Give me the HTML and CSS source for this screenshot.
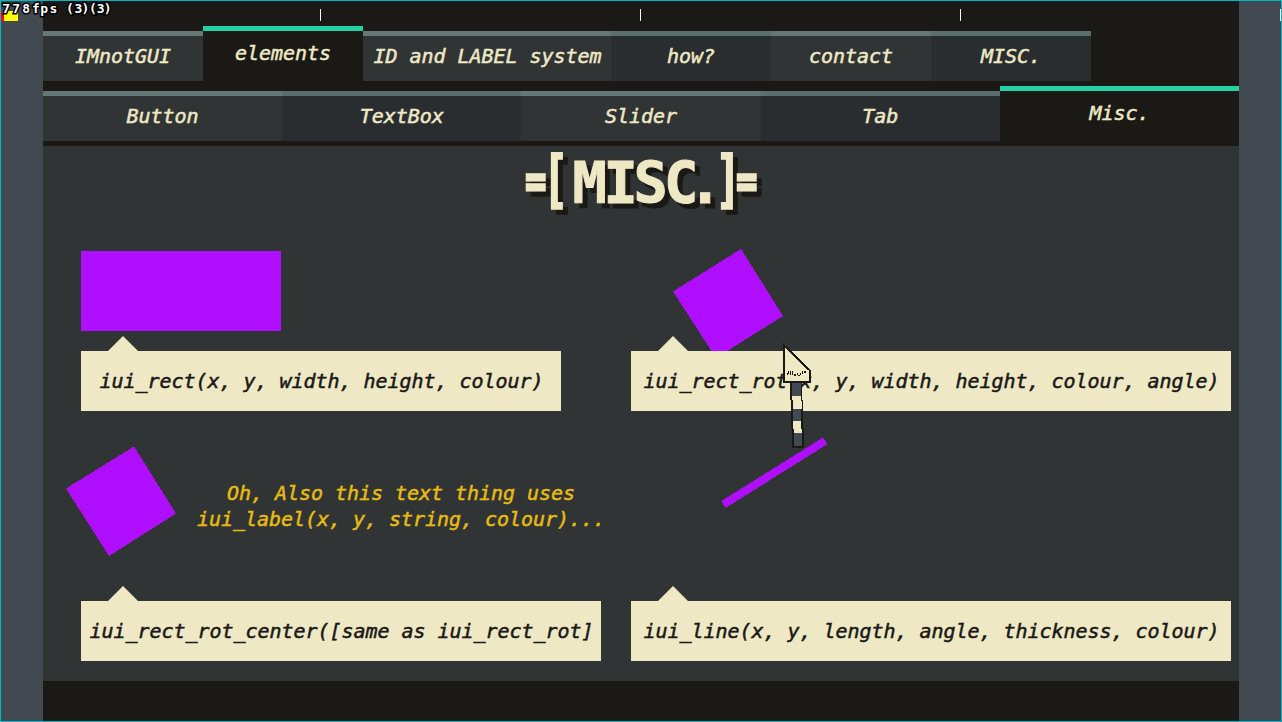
FILE: index.html
```html
<!DOCTYPE html>
<html lang="en">
<head>
<meta charset="utf-8">
<title>IMnotGUI</title>
<link rel="stylesheet" href="styles.css">
</head>
<body>
<div class="window">
  <div class="stage">
    <nav class="tabs tabs-main">
      <a class="tab">IMnotGUI</a>
      <a class="tab active">elements</a>
      <a class="tab wide">ID and LABEL system</a>
      <a class="tab alt">how?</a>
      <a class="tab">contact</a>
      <a class="tab alt">MISC.</a>
    </nav>
    <nav class="tabs tabs-sub">
      <a class="tab">Button</a>
      <a class="tab alt">TextBox</a>
      <a class="tab">Slider</a>
      <a class="tab alt">Tab</a>
      <a class="tab active">Misc.</a>
    </nav>
    <main class="panel">
      <svg class="title" width="250" height="80" viewBox="516 146 250 80">
        <text class="equals" transform="translate(525.500 195.900) scale(1 1.300)">=</text>
        <text class="bracket" transform="translate(542.700 200.300) scale(.68 1)">[</text>
        <text class="word" x="572.500 603.500 633.500 664 688" y="202.500">MISC.</text>
        <text class="bracket" transform="translate(715.200 200.300) scale(.68 1)">]</text>
        <text class="equals" transform="translate(736.500 195.900) scale(1 1.300)">=</text>
      </svg>
      <div class="demos">
        <section class="demo">
          <div class="sample"><div class="rect"></div></div>
          <div class="bubble w480">iui_rect(x, y, width, height, colour)</div>
        </section>
        <section class="demo">
          <div class="sample">
            <svg class="shape" width="200" height="120" viewBox="631 231 200 120"><path d="M741 249L783 316L716 358L673 291.500z"/></svg>
          </div>
          <div class="bubble w600">iui_rect_rot(x, y, width, height, colour, angle)</div>
        </section>
        <section class="demo">
          <div class="sample">
            <svg class="shape bleed" width="116" height="130" viewBox="61 441 116 130"><path d="M134 446.500L176 513.500L109 556L66 488.500z"/></svg>
            <p class="note">Oh, Also this text thing uses<br>iui_label(x, y, string, colour)...</p>
          </div>
          <div class="bubble w520">iui_rect_rot_center([same as iui_rect_rot]</div>
        </section>
        <section class="demo">
          <div class="sample">
            <svg class="shape" width="200" height="130" viewBox="631 431 200 130"><path d="M823 437.500L827.500 444L725.500 508L721.500 501z"/></svg>
          </div>
          <div class="bubble w600">iui_line(x, y, length, angle, thickness, colour)</div>
        </section>
      </div>
    </main>
  </div>
  <svg class="ruler" width="1282" height="24" viewBox="0 0 1282 24">
    <path class="tick" d="M320 9h1v12h-1zM640 9h1v12h-1zM960 9h1v12h-1zM1280 9h1v12h-1z"/>
    <path fill="#f00" d="M1 11h3v10h-3z"/><path fill="#ff0" d="M4 11h14v10h-14z"/>
    <text class="fps" x="2.300 12.300 22.300 32 40.300 49.500 58 66 74.500 81.500 89 96.700 103.800" y="13">778fps (3)(3)</text>
  </svg>
  <svg class="cursor" width="50" height="110" viewBox="780 341 50 110">
    <path fill="#1a1916" d="M791 382h11v18h1v28h1v20h-12v-19h-1v-29h-1v-18z"/>
    <path fill="#424950" d="M792 383h9v13h-9zM793 409h8v12h-8zM794 433h8v13h-8z"/>
    <path fill="#eee8c5" d="M792 396h9v5h1v8h-9v-9h-1zM793 421h8v8h1v4h-8v-4h-1z"/>
    <path fill="#eee8c5" stroke="#1a1916" stroke-width="2" d="M784 345.500L810 370.500V382H784z"/>
    <path fill="#1a1916" d="M783 343h1v5h-1zM787 373h1v2h-1zM788 371h1v3h-1zM790 371h1v4h-1zM792 371h1v2h-1zM792 373h1v2h-1zM794 374h2v2h-2zM797 373h1v2h-1zM798 375h2v1h-2zM800 373h1v2h-1zM802 371h1v3h-1zM804 371h2v2h-2z"/>
  </svg>
</div>
</body>
</html>
```
FILE: styles.css
```css
* { box-sizing: border-box; }

body {
  margin: 0;
  overflow: hidden;
  font: italic 20px/26px "DejaVu Sans Mono", monospace;
  letter-spacing: -0.04px;
}

.window {
  position: relative;
  width: 1282px;
  height: 722px;
  padding: 0 42px;
  border: 1px solid #00b7c7;
  background: #424950;
}

.stage {
  height: 720px;
  padding-top: 25px;
  background: #1a1916;
}

.tabs {
  display: flex;
  align-items: flex-end;
  height: 55px;
}

.tabs-sub { margin-top: 5px; }

.tab {
  width: 160px;
  height: 50px;
  padding-top: 7px;
  border-top: 5px solid #657876;
  background: #303435;
  color: #eee8c5;
  text-align: center;
  white-space: nowrap;
  -webkit-text-stroke: 0.5px;
}

.tabs-sub .tab { flex: 1; }
.tab.wide { width: 248px; padding-left: 1px; }

.tab.alt {
  border-color: #5b6f6e;
  background: #292d30;
}

.tab.active {
  height: 55px;
  border-color: #24d1a5;
  background: #1a1916;
  padding-top: 9px;
}

.panel {
  height: 535px;
  margin-top: 5px;
  background: #303435;
}

.title {
  display: block;
  margin-left: 473px;
  overflow: visible;
  font: bold 57px "DejaVu Sans Mono", monospace;
  letter-spacing: 0;
  fill: #eee8c5;
  stroke: #eee8c5;
  filter: drop-shadow(5px 5px 0 #1a1916);
}

.word { stroke-width: 1px; }

.bracket {
  font-size: 63px;
  stroke-width: 2px;
}

.equals {
  font-size: 34px;
  stroke-width: 2.4px;
}

.demos {
  display: grid;
  grid-template-columns: 550px 600px;
  row-gap: 20px;
  padding: 5px 0 0 38px;
}

.sample {
  display: flex;
  height: 120px;
}

.demo:nth-child(n+3) .sample { height: 170px; }

.rect {
  width: 200px;
  height: 80px;
  margin-top: 20px;
  background: #b00fff;
}

.shape {
  display: block;
  fill: #b00fff;
  shape-rendering: crispEdges;
}

.bleed {
  margin: 10px 0 0 -20px;
}

.note {
  width: 408px;
  margin: 49px 0 0 20px;
  color: #e6bb12;
  text-align: center;
  white-space: nowrap;
  -webkit-text-stroke: 0.5px;
}

.bubble {
  position: relative;
  height: 60px;
  padding-left: 1px;
  background: #eee8c5;
  color: #1a1916;
  line-height: 60px;
  text-align: center;
  white-space: nowrap;
  -webkit-text-stroke: 0.5px;
}

.bubble::before {
  content: "";
  position: absolute;
  left: 27px;
  top: -15px;
  border: solid transparent;
  border-width: 0 15px 15px;
  border-bottom-color: #eee8c5;
}

.w480 { width: 480px; }
.w520 { width: 520px; }
.w600 { width: 600px; }

.ruler {
  position: absolute;
  left: -1px;
  top: -1px;
}

.tick { fill: #fff; }

.fps {
  font: bold 13px "DejaVu Sans Mono", monospace;
  fill: #fff;
  stroke: #000;
  stroke-width: 3px;
  paint-order: stroke;
}

.cursor {
  position: absolute;
  left: 779px;
  top: 340px;
  shape-rendering: crispEdges;
}
```
